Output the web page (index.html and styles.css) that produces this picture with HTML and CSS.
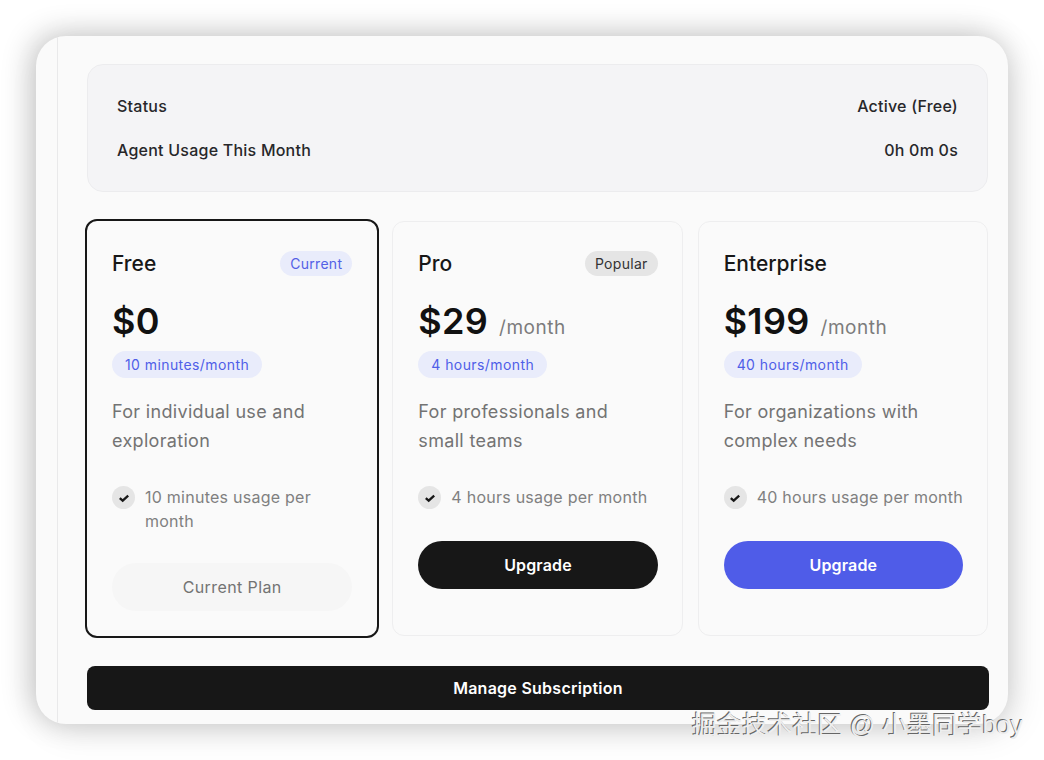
FILE: index.html
```html
<!DOCTYPE html>
<html lang="en">
  <head>
    <meta charset="UTF-8" />
    <title>Subscription</title>
    <link rel="stylesheet" href="styles.css">
  </head>
  <body>
    <div class="window">
      <div class="side"></div>
      <div class="main">
        <div class="status-box">
          <div class="status-row"><span>Status</span><span>Active (Free)</span></div>
          <div class="status-row"><span>Agent Usage This Month</span><span>0h 0m 0s</span></div>
        </div>
        <div class="plans">
          <div class="plan plan-current">
            <div class="plan-head">
              <span class="plan-name">Free</span>
              <span class="badge badge-blue">Current</span>
            </div>
            <div class="price"><span class="amount">$0</span></div>
            <span class="hours">10 minutes/month</span>
            <p class="desc">For individual use and exploration</p>
            <div class="feature">
              <span class="check"><svg width="12" height="12" viewBox="0 0 12 12"><path d="M1.8 6.1l2.9 2.6 5.5-5" /></svg></span>
              <span>10 minutes usage per month</span>
            </div>
            <button class="btn btn-muted">Current Plan</button>
          </div>
          <div class="plan">
            <div class="plan-head">
              <span class="plan-name">Pro</span>
              <span class="badge badge-gray">Popular</span>
            </div>
            <div class="price"><span class="amount">$29</span><span class="per">/month</span></div>
            <span class="hours">4 hours/month</span>
            <p class="desc">For professionals and small teams</p>
            <div class="feature">
              <span class="check"><svg width="12" height="12" viewBox="0 0 12 12"><path d="M1.8 6.1l2.9 2.6 5.5-5" /></svg></span>
              <span>4 hours usage per month</span>
            </div>
            <button class="btn btn-dark">Upgrade</button>
          </div>
          <div class="plan">
            <div class="plan-head">
              <span class="plan-name">Enterprise</span>
            </div>
            <div class="price"><span class="amount">$199</span><span class="per">/month</span></div>
            <span class="hours">40 hours/month</span>
            <p class="desc">For organizations with complex needs</p>
            <div class="feature">
              <span class="check"><svg width="12" height="12" viewBox="0 0 12 12"><path d="M1.8 6.1l2.9 2.6 5.5-5" /></svg></span>
              <span>40 hours usage per month</span>
            </div>
            <button class="btn btn-blue">Upgrade</button>
          </div>
        </div>
        <button class="manage">Manage Subscription</button>
      </div>
    </div>
    <div class="watermark">掘金技术社区 @ 小墨同学boy</div>
  </body>
</html>
```

FILE: styles.css
```css
html, body {
  height: 100%;
}
body {
  margin: 0;
  background: #fff;
  font-family: Inter, "Liberation Sans", sans-serif;
  color: #171717;
  overflow: hidden;
  position: relative;
}
.window {
  display: flex;
  width: 972px;
  height: 688px;
  margin: 36px 0 0 36px;
  background: #fafafa;
  border-radius: 30px;
  overflow: hidden;
  box-shadow: -6px -3px 30px rgba(0, 0, 0, 0.2), 8px 8px 34px rgba(0, 0, 0, 0.1);
}
.side {
  width: 21px;
  border-right: 1px solid #e9e9ea;
  flex-shrink: 0;
}
.main {
  width: 902px;
  margin-left: 29px;
  padding-top: 28px;
}
.status-box {
  box-sizing: content-box;
  width: 841px;
  height: 88px;
  padding: 19px 29px;
  display: flex;
  flex-direction: column;
  justify-content: space-between;
  background: #f4f4f6;
  border: 1px solid #ececee;
  border-radius: 16px;
  font-size: 16px;
  font-weight: 500;
  letter-spacing: 0.23px;
  line-height: 44px;
}
.status-row {
  display: flex;
  justify-content: space-between;
  color: #27272a;
}
.plans {
  display: grid;
  grid-template-columns: repeat(3, 1fr);
  gap: 15px;
  margin-top: 29px;
  height: 415px;
  width: 901px;
}
.plan {
  display: flex;
  flex-direction: column;
  align-items: flex-start;
  padding: 0 24px 0 25px;
  background: #fafafa;
  border: 1px solid #eeeeef;
  border-radius: 12px;
}
.plan-current {
  margin: -2px;
  padding: 1px 25px 0;
  border: 2px solid #171717;
}
.plan-head {
  display: flex;
  justify-content: space-between;
  align-items: center;
  align-self: stretch;
  margin-top: 28px;
  height: 26px;
}
.plan-name {
  font-size: 21px;
  font-weight: 500;
}
.badge {
  padding: 0 10px;
  border-radius: 13px;
  font-size: 14px;
  letter-spacing: 0.3px;
  line-height: 25px;
}
.badge-blue {
  background: #e9ecfb;
  color: #5360e6;
}
.badge-gray {
  background: #e5e5e5;
  color: #333;
}
.price {
  display: flex;
  align-items: baseline;
  gap: 11px;
  margin-top: 20px;
  height: 50px;
  line-height: 50px;
}
.amount {
  font-size: 36px;
  font-weight: 600;
  letter-spacing: 0.3px;
  color: #111;
}
.per {
  font-size: 19px;
  letter-spacing: 0.5px;
  color: #7c7c7c;
}
.hours {
  margin-top: 5px;
  padding: 0 13px;
  border-radius: 14px;
  background: #e9ecfb;
  color: #4f5ee8;
  font-size: 14px;
  letter-spacing: 0.42px;
  line-height: 27px;
}
.desc {
  margin: 19px 0 0;
  font-size: 18px;
  letter-spacing: 0.32px;
  line-height: 29px;
  color: #737373;
}
.feature {
  display: flex;
  gap: 10px;
  margin-top: 30px;
  font-size: 16px;
  letter-spacing: 0.25px;
  line-height: 24px;
  color: #808080;
}
.check {
  display: flex;
  align-items: center;
  justify-content: center;
  flex-shrink: 0;
  width: 23px;
  height: 23px;
  margin-top: 1px;
  border-radius: 50%;
  background: #e5e5e5;
}
.check path {
  fill: none;
  stroke: #171717;
  stroke-width: 2.3;
}
.btn {
  align-self: stretch;
  height: 48px;
  margin-top: 32px;
  border: none;
  border-radius: 24px;
  font-family: inherit;
  font-size: 16px;
  font-weight: 600;
  letter-spacing: 0.15px;
  color: #fff;
}
.btn-dark {
  background: #171717;
}
.btn-blue {
  background: #4f5ce8;
}
.btn-muted {
  margin-top: 30px;
  background: #f6f6f6;
  color: #737373;
  font-weight: 400;
  letter-spacing: 0.4px;
}
.manage {
  display: block;
  width: 902px;
  height: 44px;
  margin-top: 30px;
  border: none;
  border-radius: 8px;
  background: #171717;
  color: #fff;
  font-family: inherit;
  font-size: 16px;
  font-weight: 600;
  letter-spacing: 0.26px;
}
.watermark {
  position: absolute;
  left: 692px;
  top: 708px;
  font-family: "Liberation Sans", "Noto Sans CJK SC", sans-serif;
  font-size: 25px;
  letter-spacing: 0.1px;
  line-height: 34px;
  color: #eee;
  text-shadow: -1px -1px 0 #666;
  white-space: nowrap;
}
```
